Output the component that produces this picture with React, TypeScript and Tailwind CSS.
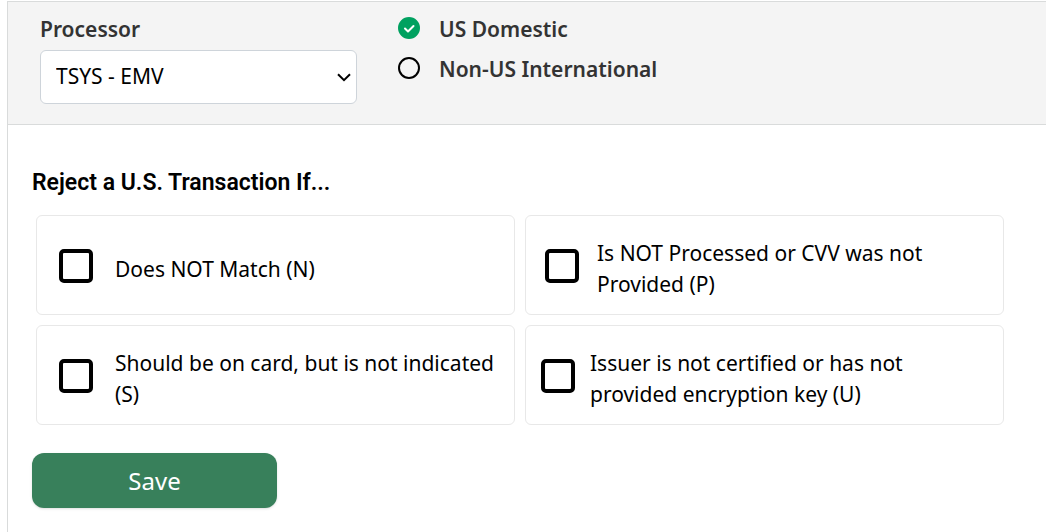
import { useState } from 'react';

const regions = ['US Domestic', 'Non-US International'];

const rules = [
  { code: 'N', text: 'Does NOT Match (N)', layout: 'pl-[22px] gap-[22px]' },
  { code: 'P', text: 'Is NOT Processed or CVV was not Provided (P)', layout: 'pl-[19px] gap-[18px]' },
  { code: 'S', text: 'Should be on card, but is not indicated (S)', layout: 'pl-[22px] gap-[22px]' },
  { code: 'U', text: 'Issuer is not certified or has not provided encryption key (U)', layout: 'pl-[15px] gap-[15px]' },
];

export default function App() {
  const [region, setRegion] = useState('US Domestic');

  return (
    <div className="pl-[7px] pt-px min-h-screen bg-white font-['Noto_Sans',sans-serif] text-black flex flex-col">
      <main className="flex-1 border-l border-t border-[#d9dbdb]">
        <div className="flex gap-[41px] pl-8 pb-5 bg-[#f4f4f4] border-b border-[#d9dbdb]">
          <div className="w-[317px] pt-[11px]">
            <label htmlFor="processor" className="block text-[21px] leading-8 font-semibold text-[#333333]">
              Processor
            </label>
            <div className="relative mt-[5px]">
              <select
                id="processor"
                className="block appearance-none w-full h-[54px] pl-[15px] pr-8 bg-white border border-[#ced4da] rounded-md text-[21px]"
              >
                <option>TSYS - EMV</option>
              </select>
              <svg
                className="absolute right-[6px] top-5 pointer-events-none"
                width="14"
                height="14"
                viewBox="0 0 14 14"
                fill="none"
                stroke="#000"
                strokeWidth="2"
              >
                <path d="M1 4.2l6 6 6-6" />
              </svg>
            </div>
          </div>

          <div className="pt-2">
            {regions.map((name) => (
              <label
                key={name}
                className="flex items-center gap-[17px] h-10 text-[21px] font-semibold text-[#333333]"
              >
                <span className="relative size-6 pb-1 flex items-center">
                  <input
                    type="radio"
                    name="region"
                    checked={region === name}
                    onChange={() => setRegion(name)}
                    className="peer appearance-none size-[22px] rounded-full border-2 border-black checked:border-[#00a160] checked:bg-[#00a160]"
                  />
                  <svg
                    className="absolute left-0 top-0 hidden peer-checked:block pointer-events-none"
                    width="22"
                    height="22"
                    viewBox="0 0 22 22"
                    fill="none"
                    stroke="#fff"
                    strokeWidth="2"
                    strokeLinecap="round"
                    strokeLinejoin="round"
                  >
                    <path d="M7 10.5l3 3 5.5-5.5" />
                  </svg>
                </span>
                {name}
              </label>
            ))}
          </div>
        </div>

        <div className="pl-6 pr-[42px] pt-10 pb-6">
          <h2 className="text-[23px] leading-9 font-semibold font-['Roboto',sans-serif]">
            Reject a U.S. Transaction If...
          </h2>

          <div className="mt-[14px] ml-1 grid grid-cols-2 gap-[10px]">
            {rules.map((rule) => (
              <label
                key={rule.code}
                className={`flex items-center min-h-[100px] pr-4 pt-1 border border-[#e8e8e8] rounded-md text-[21px] leading-[31px] ${rule.layout}`}
              >
                <input
                  type="checkbox"
                  className="appearance-none shrink-0 size-[34px] mb-[3px] border-4 border-black rounded-[5px] checked:bg-black"
                />
                <span className="pt-1">{rule.text}</span>
              </label>
            ))}
          </div>

          <button
            type="button"
            className="mt-7 w-[245px] h-[55px] bg-[#38805b] text-white text-2xl rounded-xl shadow-sm hover:bg-[#2f6d4d]"
          >
            Save
          </button>
        </div>
      </main>
    </div>
  );
}
